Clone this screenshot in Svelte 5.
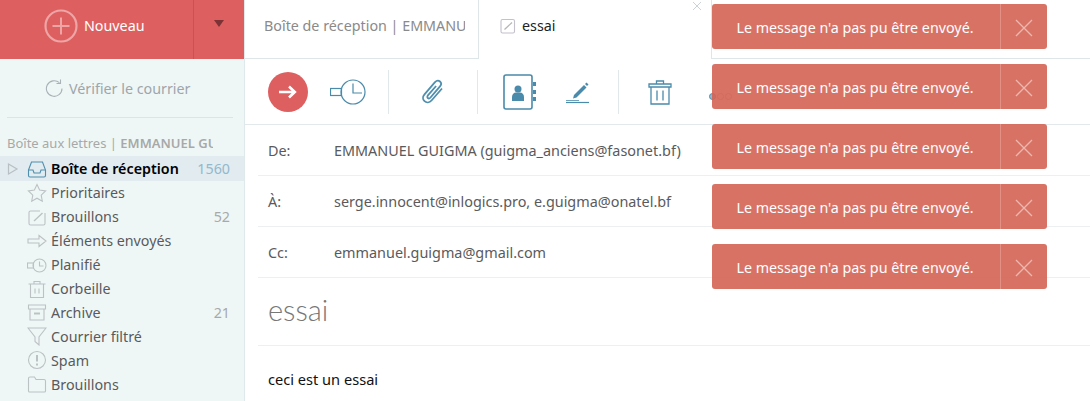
<script>
  const folders = [
    { name: "Boîte de réception", count: "1560", icon: "inbox", active: true },
    { name: "Prioritaires", icon: "star" },
    { name: "Brouillons", count: "52", icon: "draft" },
    { name: "Éléments envoyés", icon: "sent" },
    { name: "Planifié", icon: "clock" },
    { name: "Corbeille", icon: "trash" },
    { name: "Archive", count: "21", icon: "archive" },
    { name: "Courrier filtré", icon: "filter" },
    { name: "Spam", icon: "spam" },
    { name: "Brouillons", icon: "folder" },
  ];
  const fields = [
    { label: "De:", value: "EMMANUEL GUIGMA (guigma_anciens@fasonet.bf)" },
    { label: "À:", value: "serge.innocent@inlogics.pro, e.guigma@onatel.bf" },
    { label: "Cc:", value: "emmanuel.guigma@gmail.com" },
  ];
  const toasts = [1, 2, 3, 4, 5];
</script>

<div class="page">
  <aside class="sidebar">
    <div class="new-bar">
      <button class="new-btn">
        <svg width="34" height="34" viewBox="0 0 34 34" fill="none" stroke="#eea5a6">
          <circle cx="17" cy="17" r="15.5" stroke-width="2.2" />
          <path d="M17 8.5v17M8.5 17h17" stroke-width="2" />
        </svg>
        <span>Nouveau</span>
      </button>
      <button class="new-arrow" aria-label="Menu"><i></i></button>
    </div>

    <div class="check">
      <svg width="19" height="19" viewBox="0 0 19 19" fill="none" stroke="#a9b2b7" stroke-width="1.1">
        <path d="M17 9.5a7.8 7.8 0 1 1-2.6-5.8" />
        <path d="M15.5 0.5v4h-4" />
      </svg>
      <span>Vérifier le courrier</span>
    </div>

    <div class="mailbox"><span>Boîte aux lettres | <b>EMMANUEL GUIGMA</b></span></div>

    <ul class="folders">
      {#each folders as f}
        <li class:active={f.active}>
          <span class="caret">{#if f.active}<svg width="12" height="14" viewBox="0 0 12 14" fill="none" stroke="#b9c0c3" stroke-width="1.2"><path d="M1.5 2l8.5 5-8.5 5z" /></svg>{/if}</span>
          <span class="ficon">
            <svg width="20" height="20" viewBox="0 0 20 20" fill="none" stroke={f.active ? "#4f8fae" : "#bcc2c4"} stroke-width="1.1">
              {#if f.icon === "inbox"}
                <path d="M1.5 11l3-8h11l3 8v5.5a1.5 1.5 0 0 1-1.5 1.5H3a1.5 1.5 0 0 1-1.5-1.5z" />
                <path d="M1.5 11H6l1 3h6l1-3h4.5" />
              {:else if f.icon === "star"}
                <path d="M10 1.5l2.6 5.6 6 .8-4.4 4.2 1.1 6.1-5.3-3-5.3 3 1.1-6.1L1.4 7.9l6-.8z" />
              {:else if f.icon === "draft"}
                <path d="M18 6v10.5a1.5 1.5 0 0 1-1.5 1.5h-13A1.5 1.5 0 0 1 2 16.5v-11A1.5 1.5 0 0 1 3.5 4H13" />
                <path d="M7 14L15.5 6" stroke-width="1.4" />
              {:else if f.icon === "sent"}
                <path d="M1 8h11V4.5L19 10l-7 5.5V12H1z" />
              {:else if f.icon === "clock"}
                <rect x="0.5" y="8" width="6" height="5" />
                <circle cx="12.5" cy="10.5" r="6.5" />
                <path d="M12.5 6.5V11h4" />
              {:else if f.icon === "trash"}
                <path d="M1.5 5h17M7 5V2.5h6V5M3.5 5v13.5h13V5M8 9.5v5M12 9.5v5" />
              {:else if f.icon === "archive"}
                <path d="M1.5 3h17v4h-17zM3 7v11h14V7" />
                <path d="M7 11.5h6" stroke-width="2" />
              {:else if f.icon === "filter"}
                <path d="M1 2h18l-7 9v8l-4-3.5V11z" />
              {:else if f.icon === "spam"}
                <circle cx="10" cy="10" r="8.5" />
                <path d="M10 5v6.5M10 13.5v2" stroke-width="2" />
              {:else}
                <path d="M1.5 17V4.500A1.5 1.5 0 0 1 3 3h4.500L9 5.500h8A1.500 1.500 0 0 1 18.500 7v10a1 1 0 0 1-1 1h-15a1 1 0 0 1-1-1z" />
              {/if}
            </svg>
          </span>
          <span class="fname">{f.name}</span>
          {#if f.count}<span class="fcount">{f.count}</span>{/if}
        </li>
      {/each}
    </ul>
  </aside>

  <main class="main">
    <div class="tabs">
      <div class="tab"><span>Boîte de réception | EMMANUEL GUIGMA</span></div>
      <div class="tab current">
        <svg width="16" height="16" viewBox="0 0 16 16" fill="none" stroke="#c4c0cc" stroke-width="1.1">
          <rect x="1" y="1.5" width="13.5" height="13.5" rx="1.5" />
          <path d="M4.5 11.5L12 4.5" stroke="#b5b5b5" stroke-width="1.2" />
        </svg>
        <span class="tab-title">essai</span>
        <svg class="tab-close" width="10" height="10" viewBox="0 0 10 10" stroke="#cdd3d5"><path d="M1 1l8 8M9 1l-8 8" /></svg>
      </div>
    </div>

    <div class="toolbar">
      <div class="group first">
        <button class="send" aria-label="Envoyer">
          <svg width="18" height="14" viewBox="0 0 18 14" fill="none" stroke="#fff" stroke-width="2.6"><path d="M0 7h15.5M10 1.5L15.8 7 10 12.5" /></svg>
        </button>
        <svg width="36" height="26" viewBox="0 0 36 26" fill="none" stroke="#4a8aaa" stroke-width="1.2">
          <rect x="0.5" y="9.5" width="11" height="7" />
          <circle cx="23" cy="13" r="12" />
          <path d="M23 4.5V14h9" />
        </svg>
      </div>
      <div class="group clip">
        <svg width="24" height="26" viewBox="0 0 24 26" fill="none" stroke="#4f8fae" stroke-width="1.8">
          <path d="M21 9.5L10.500 21.500c-2 2.200-5 2.500-7 .7s-1.900-4.700 0-6.900L14 3.200c1.500-1.700 3.600-1.900 5-.7s1.400 3.200 0 4.900L9.500 18.500c-.9 1-2 1.100-2.700.5s-.6-1.800.3-2.800l8-9.200" />
        </svg>
      </div>
      <div class="group people">
        <svg width="33" height="36" viewBox="0 0 33 36" fill="none">
          <rect x="1" y="1" width="28" height="34" rx="2" stroke="#4a8aaa" stroke-width="1.6" />
          <path d="M30 8h3v4h-3zM30 16h3v4h-3zM30 23h3v4h-3z" fill="#4a8aaa" />
          <circle cx="15" cy="15" r="3.5" fill="#4a8aaa" />
          <path d="M9 27v-4c0-3 2-4.500 4-4.500h4c2 0 4 1.500 4 4.500v4z" fill="#4a8aaa" />
        </svg>
        <svg width="26" height="24" viewBox="0 0 26 24" fill="none" stroke="#4a8aaa">
          <path d="M8 18.500l1-3.500 10-10 2.500 2.500-10 10z" fill="#4a8aaa" stroke="none" />
          <path d="M20 4l1.500-1.500 2 2L22 6z" fill="#4a8aaa" stroke="none" />
          <path d="M1 22.500h23" stroke-width="1.2" />
          <path d="M1 20.500h13" stroke-width="0.8" />
        </svg>
      </div>
      <div class="group trash">
        <svg width="24" height="26" viewBox="0 0 24 26" fill="none" stroke="#4a8aaa" stroke-width="1.3">
          <path d="M1 5h22v3H1zM8.500 5V2h7v3M3 8v17h18V8M9 11.500v10M15 11.500v10" />
        </svg>
      </div>
      <div class="dots"><i class="on"></i><i></i><i></i></div>
    </div>

    {#each fields as r}
      <div class="field"><span class="flabel">{r.label}</span><span>{r.value}</span></div>
    {/each}

    <div class="subject">essai</div>
    <div class="body-text">ceci est un essai</div>
  </main>

  <div class="toasts">
    {#each toasts as t (t)}
      <div class="toast">
        <span class="toast-msg">Le message n'a pas pu être envoyé.</span>
        <button class="toast-x" aria-label="Fermer">
          <svg width="18" height="18" viewBox="0 0 18 18" stroke="#eeb7ae" stroke-width="1.3"><path d="M1 1l16 16M17 1L1 17" /></svg>
        </button>
      </div>
    {/each}
  </div>
</div>

<style>
  :global(body) {
    background: #fff;
    overflow: hidden;
  }
  .page {
    display: flex;
    width: 1090px;
    height: 401px;
    overflow: hidden;
    position: relative;
    font-family: "Noto Sans", sans-serif;
    font-size: 14.3px;
    color: #5a5a5c;
  }
  button {
    border: 0;
    padding: 0;
    background: none;
    font: inherit;
    color: inherit;
  }
  .sidebar {
    width: 245px;
    flex: none;
    background: #eff7f6;
    box-sizing: border-box;
    border-right: 1px solid #dfe8ea;
  }
  .new-bar {
    display: flex;
    height: 59px;
    background: #de5f60;
  }
  .new-btn {
    width: 194px;
    display: flex;
    align-items: center;
    gap: 6px;
    padding: 0 0 8px 44px;
    box-sizing: border-box;
    border-right: 1px solid #c65455;
    color: #fff;
  }
  .new-arrow {
    flex: 1;
    display: flex;
    align-items: center;
    justify-content: center;
  }
  .new-arrow i {
    width: 0;
    height: 0;
    margin-bottom: 12px;
    border-left: 5px solid transparent;
    border-right: 5px solid transparent;
    border-top: 7px solid #7c3335;
  }
  .check {
    margin: 0 11px 0 7px;
    height: 58px;
    display: flex;
    align-items: center;
    gap: 5px;
    border-bottom: 1px solid #dce5e6;
    color: #9ea6ab;
    padding-left: 38px;
  }
  .mailbox {
    margin: 16px 31px 0 7px;
    height: 18px;
    overflow: hidden;
    white-space: nowrap;
    font-size: 13px;
    line-height: 18px;
    color: #a7a9a9;
  }
  .mailbox b {
    font-weight: 600;
  }
  .folders {
    list-style: none;
    margin: 4px 0 0;
    padding: 0;
  }
  .folders li {
    display: flex;
    align-items: center;
    height: 23.9px;
    padding-right: 14px;
  }
  .folders li.active {
    height: 25px;
    background: #e1ebf0;
    color: #000;
    font-weight: 600;
  }
  .caret {
    width: 27px;
    padding-left: 7px;
    box-sizing: border-box;
    display: flex;
  }
  .ficon {
    width: 24px;
    display: flex;
  }
  .fname {
    flex: 1;
  }
  .fcount {
    color: #a9a9a9;
  }
  .active .fcount {
    color: #93b8cd;
    font-weight: 400;
  }
  .main {
    flex: 1;
    min-width: 0;
  }
  .tabs {
    display: flex;
    height: 59px;
    border-bottom: 1px solid #dfe6e8;
    box-sizing: border-box;
  }
  .tab {
    width: 234px;
    box-sizing: border-box;
    padding: 0 0 8px 19px;
    display: flex;
    align-items: center;
    border-right: 1px solid #dfe6e8;
    color: #8a8a8a;
  }
  .tab span {
    display: block;
    width: 201px;
    overflow: hidden;
    white-space: nowrap;
  }
  .tab.current {
    position: relative;
    width: 233px;
    height: 59px;
    padding-left: 21px;
    gap: 6px;
    background: #fff;
    color: #222;
  }
  .tab .tab-title {
    width: auto;
  }
  .tab-close {
    position: absolute;
    top: 1px;
    right: 9px;
  }
  .toolbar {
    display: flex;
    align-items: center;
    height: 66px;
    border-bottom: 1px solid #e3e9eb;
    box-sizing: border-box;
  }
  .group {
    height: 44px;
    display: flex;
    align-items: center;
    border-right: 1px solid #e0e8ea;
    box-sizing: border-box;
  }
  .group.first {
    width: 144px;
    padding-left: 23px;
    gap: 2px;
  }
  .group.clip {
    width: 89px;
    padding-left: 32px;
  }
  .group.people {
    width: 141px;
    padding-left: 25px;
    gap: 29px;
  }
  .group.trash {
    width: 90px;
    padding-left: 29px;
    border-right: 0;
  }
  .send {
    width: 40px;
    height: 40px;
    margin-right: 20px;
    border-radius: 50%;
    background: #de5f60;
    display: flex;
    align-items: center;
    justify-content: center;
  }
  .dots {
    display: flex;
    gap: 1px;
    margin-top: 9px;
  }
  .dots i {
    width: 5px;
    height: 5px;
    border: 1px solid #a9b2b7;
    border-radius: 50%;
  }
  .dots i.on {
    border-color: #4f8fae;
    background: #8fbbd2;
  }
  .field {
    display: flex;
    align-items: center;
    height: 51px;
    margin-left: 13px;
    padding: 1px 0 0 10px;
    border-bottom: 1px solid #edf0f1;
    box-sizing: border-box;
    font-size: 14.4px;
  }
  .flabel {
    width: 66px;
    flex: none;
  }
  .subject {
    height: 68px;
    margin-left: 13px;
    padding: 0 0 4px 10px;
    display: flex;
    align-items: center;
    box-sizing: border-box;
    border-bottom: 1px solid #edf0f1;
    font-family: Lato, sans-serif;
    font-size: 29px;
    font-weight: 300;
    color: #777;
  }
  .body-text {
    padding: 23px 0 0 23px;
    color: #111;
    font-size: 14.6px;
  }
  .toasts {
    position: absolute;
    top: 4px;
    left: 712px;
    width: 335px;
    display: flex;
    flex-direction: column;
    gap: 15px;
  }
  .toast {
    display: flex;
    height: 45px;
    border-radius: 3px;
    background: rgba(212, 99, 84, 0.9);
    color: #fff;
    overflow: hidden;
  }
  .toast-msg {
    flex: 1;
    display: flex;
    align-items: center;
    justify-content: center;
    padding: 2px 2px 0 0;
  }
  .toast-x {
    width: 47px;
    padding-top: 3px;
    display: flex;
    align-items: center;
    justify-content: center;
    border-left: 1px solid #e39184;
  }
</style>
